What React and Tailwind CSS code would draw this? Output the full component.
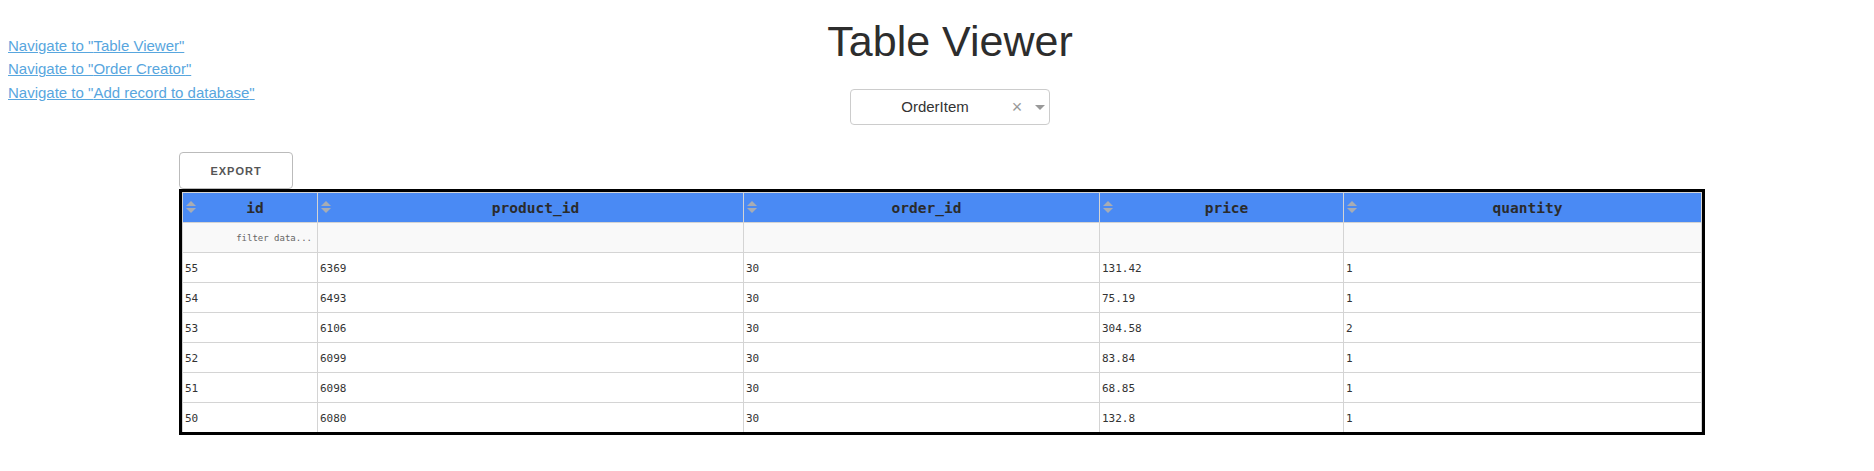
import React from "react";

const cols = [
  { key: "id", w: "w-[135px]" },
  { key: "product_id", w: "w-[426px]" },
  { key: "order_id", w: "w-[356px]" },
  { key: "price", w: "w-[244px]" },
  { key: "quantity", w: "w-[358px]" },
];

const rows = [
  ["55", "6369", "30", "131.42", "1"],
  ["54", "6493", "30", "75.19", "1"],
  ["53", "6106", "30", "304.58", "2"],
  ["52", "6099", "30", "83.84", "1"],
  ["51", "6098", "30", "68.85", "1"],
  ["50", "6080", "30", "132.8", "1"],
];

function SortArrows() {
  return (
    <svg width="10" height="13" viewBox="0 0 10 13" className="absolute left-[3px] top-[8px]">
      <polygon points="0,5 5,0 10,5" fill="#a8acb3" />
      <polygon points="0,7 10,7 5,12" fill="#a8acb3" />
    </svg>
  );
}

export default function App() {
  const mono = "font-['DejaVu_Sans_Mono','Liberation_Mono',monospace]";
  return (
    <div className="w-[1874px] h-[471px] bg-white font-['Liberation_Sans',Arial,sans-serif] text-[#333]">
      <div className="flex">
        <div className="w-[300px] shrink-0 pl-[8px] pt-[34px] flex flex-col">
          {["Table Viewer", "Order Creator", "Add record to database"].map((t) => (
            <a key={t} href="#" className="text-[15px] leading-[23.3px] text-[#58a6de] underline whitespace-nowrap w-fit">
              Navigate to "{t}"
            </a>
          ))}
        </div>
        <div className="flex-1 flex flex-col items-center pr-[274px]">
          <h1 className="mt-[20px] text-[43px] leading-[43px] font-normal text-[#2d2d2d]">Table Viewer</h1>
          <div className="mt-[26px] w-[200px] h-[36px] border border-[#ccc] rounded-[4px] bg-white flex items-center">
            <div className="flex-1 pl-[10px] text-center text-[15px] text-[#333]">OrderItem</div>
            <div className="w-[16px] text-center text-[18px] leading-none text-[#999]">×</div>
            <div className="w-[24px] pl-[5px] flex justify-center">
              <div className="w-0 h-0 border-t-[5px] border-x-[5px] border-x-transparent border-t-[#999]" />
            </div>
          </div>
        </div>
      </div>

      <div className="pl-[179px] pt-[27px]">
        <button className="w-[114px] h-[37px] border border-[#bbb] rounded-[4px] bg-white pt-[2px] text-[11px] font-semibold tracking-[1px] text-[#555]">
          EXPORT
        </button>
        <div className="w-[1526px] border-[3px] border-black">
          <div className={`border-t border-l border-[#d4d4d4] ${mono}`}>
            <div className="flex bg-[#4a8af4]">
              {cols.map((c) => (
                <div
                  key={c.key}
                  className={`${c.w} relative h-[30px] border-r border-b border-[#d4d4d4] flex items-center justify-center pl-[14px] pr-[4px] pt-[2px] text-[14.5px] font-bold text-[#2b2b2b]`}
                >
                  <SortArrows />
                  {c.key}
                </div>
              ))}
            </div>
            <div className="flex bg-[#f9f9f9]">
              {cols.map((c, i) => (
                <div key={c.key} className={`${c.w} h-[30px] border-r border-b border-[#d4d4d4] flex items-center justify-end pr-[5px] pt-[2px] text-[9px] text-[#666]`}>
                  {i === 0 ? "filter data..." : ""}
                </div>
              ))}
            </div>
            {rows.map((r, ri) => (
              <div key={ri} className="flex bg-white">
                {r.map((v, ci) => (
                  <div
                    key={ci}
                    className={`${cols[ci].w} ${ri === rows.length - 1 ? "h-[29px]" : "h-[30px] border-b"} border-r border-[#d4d4d4] flex items-center pl-[2px] pt-[3px] text-[11px] text-[#333]`}
                  >
                    {v}
                  </div>
                ))}
              </div>
            ))}
          </div>
        </div>
      </div>
    </div>
  );
}
